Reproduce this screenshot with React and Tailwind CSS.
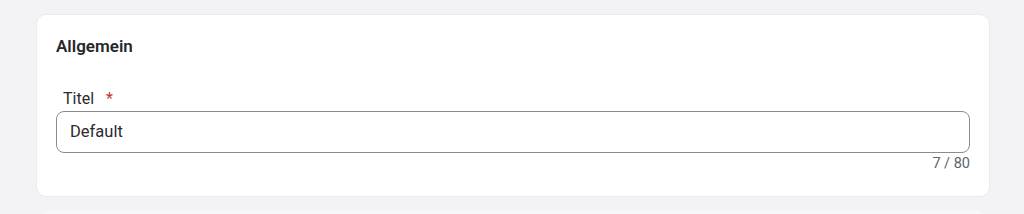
import React from "react";

export default function App() {
  return (
    <div
      className="w-[1024px] h-[214px] overflow-hidden bg-[#f3f3f6] pt-[14px] pl-[36px]"
      style={{ fontFamily: "Roboto, 'Liberation Sans', sans-serif" }}
    >
      {/* card */}
      <div className="w-[954px] h-[183px] bg-white rounded-[10px] border border-[#ebebef] px-[19px] pt-[21px]">
        <h2 className="text-[17px] leading-5 font-semibold text-[#26272a]">Allgemein</h2>

        <div className="mt-[33px]">
          <label className="flex items-center gap-[12px] pl-[7px] text-[16px] leading-5 text-[#2b2b2e]">
            Titel
            <span className="text-[#c0392b] text-[16px]">*</span>
          </label>
          <div className="mt-[2px] h-[42px] rounded-[8px] border border-[#8c8c90] flex items-center px-[13px]">
            <span className="text-[16.5px] text-[#2b2b2e]">Default</span>
          </div>
          <div className="mt-[3px] text-right text-[14.5px] leading-4 text-[#5f6368]">7 / 80</div>
        </div>
      </div>

      {/* next card peeking in */}
      <div className="mt-[13px] ml-[6px] w-[944px] h-[10px] bg-[#f7f7f9] rounded-t-[10px]" />
    </div>
  );
}
